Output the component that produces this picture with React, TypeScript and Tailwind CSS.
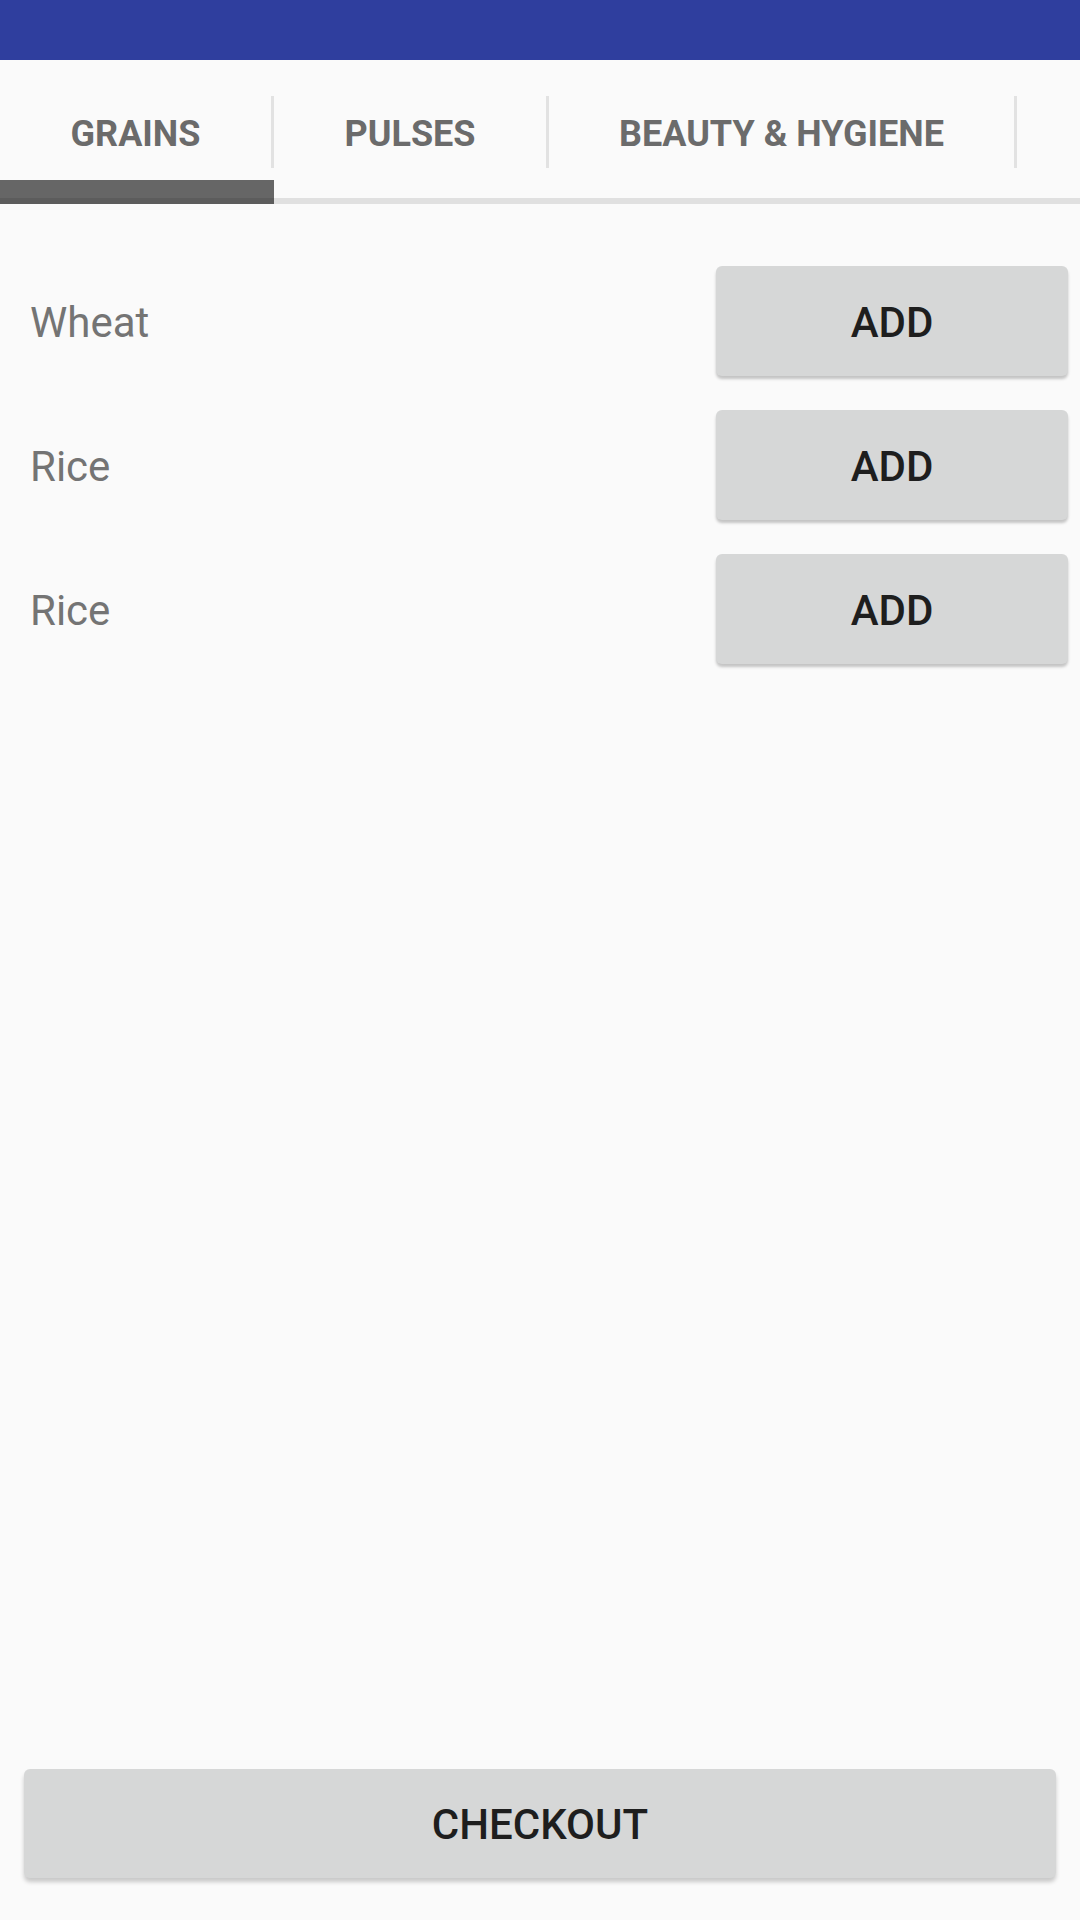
import React from 'react';

const items = ['Wheat', 'Rice', 'Rice'];

const tabs = [
  { label: 'GRAINS', width: 'w-[274px]' },
  { label: 'PULSES', width: 'w-[275px]' },
  { label: 'BEAUTY & HYGIENE', width: 'w-[468px]' },
];

export default function App() {
  return (
    <div
      className="w-[1080px] h-[1920px] flex flex-col bg-[#fafafa] overflow-hidden"
      style={{ fontFamily: 'Roboto, "Liberation Sans", sans-serif' }}
    >
      {/* Status bar */}
      <div className="h-[60px] bg-[#2f3e9e] shrink-0" />

      {/* Tabs */}
      <div className="relative h-[144px] shrink-0 flex">
        {tabs.map((t) => (
          <div key={t.label} className={`${t.width} h-full flex items-center relative`}>
            <span className="flex-1 text-center text-[36px] font-bold text-[#6b6b6b] pt-[3px]">
              {t.label}
            </span>
            <div className="w-[3px] h-[72px] bg-[#e2e2e2] self-start mt-[36px]" />
          </div>
        ))}
        <div className="flex-1" />
        <div className="absolute left-0 right-0 bottom-0 h-[6px] bg-[#e0e0e0]" />
        <div className="absolute left-0 bottom-0 w-[274px] h-[24px] bg-[#666666]" />
        <div className="absolute left-0 bottom-0 w-[274px] h-[6px] bg-[#5c5c5c]" />
      </div>

      {/* Item list */}
      <div className="flex flex-col gap-[34px] pt-[62px]">
        {items.map((name, i) => (
          <div key={i} className="flex items-center justify-between pl-[30px] pr-[12px]">
            <span className="text-[42px] text-[#747474] pt-[2px]">{name}</span>
            <button className="w-[352px] h-[110px] rounded-[6px] bg-[#d6d7d7] shadow-[0_3px_3px_rgba(0,0,0,0.22)] text-[42px] font-medium text-[#1e1e1e] pt-[2px]">
              ADD
            </button>
          </div>
        ))}
      </div>

      <div className="flex-1" />

      {/* Checkout */}
      <div className="px-[24px] pb-[42px]">
        <button className="w-full h-[109px] rounded-[6px] bg-[#d6d7d7] shadow-[0_4px_4px_rgba(0,0,0,0.2)] text-[42px] font-medium text-[#1e1e1e] pt-[2px]">
          CHECKOUT
        </button>
      </div>
    </div>
  );
}
